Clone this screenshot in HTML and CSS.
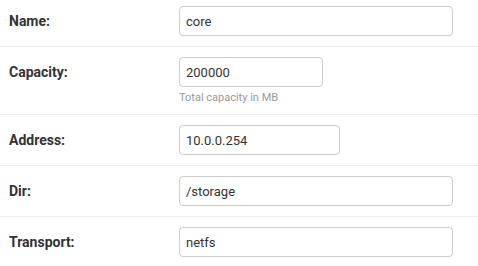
FILE: index.html
```html
<!DOCTYPE html>
<html>
<head>
<meta charset="utf-8">
<link rel="stylesheet" href="styles.css">
</head>
<body>
<form class="form">
  <div class="row">
    <label class="label">Name:</label>
    <div class="field"><input class="input wide" type="text" value="core"></div>
  </div>
  <div class="row">
    <label class="label">Capacity:</label>
    <div class="field">
      <input class="input num" type="text" value="200000">
      <div class="help">Total capacity in MB</div>
    </div>
  </div>
  <div class="row">
    <label class="label">Address:</label>
    <div class="field"><input class="input addr" type="text" value="10.0.0.254"></div>
  </div>
  <div class="row">
    <label class="label">Dir:</label>
    <div class="field"><input class="input wide" type="text" value="/storage"></div>
  </div>
  <div class="row">
    <label class="label">Transport:</label>
    <div class="field"><input class="input wide" type="text" value="netfs"></div>
  </div>
</form>
</body>
</html>
```
FILE: styles.css
```css
html, body {
  margin: 0;
  padding: 0;
  background: #fff;
}
body {
  font-family: Roboto, "Liberation Sans", sans-serif;
  color: #333;
  overflow: hidden;
}
.form {
  margin-top: -4px;
}
.row {
  display: flex;
  align-items: flex-start;
  padding: 10px 9px;
  border-bottom: 1px solid #eee;
}
.label {
  width: 170px;
  flex: none;
  font-size: 14px;
  font-weight: bold;
  line-height: 30px;
  color: #333;
}
.field {
  display: flex;
  flex-direction: column;
}
.input {
  box-sizing: border-box;
  height: 30px;
  margin: 0;
  padding: 0 6px;
  border: 1px solid #ccc;
  border-radius: 4px;
  font-family: Roboto, "Liberation Sans", sans-serif;
  font-size: 13px;
  color: #333;
  background: #fff;
  outline: none;
}
.wide { width: 274px; }
.num { width: 144px; }
.addr { width: 161px; }
.help {
  margin-top: 4px;
  font-size: 11px;
  line-height: 13px;
  color: #999;
}
```
